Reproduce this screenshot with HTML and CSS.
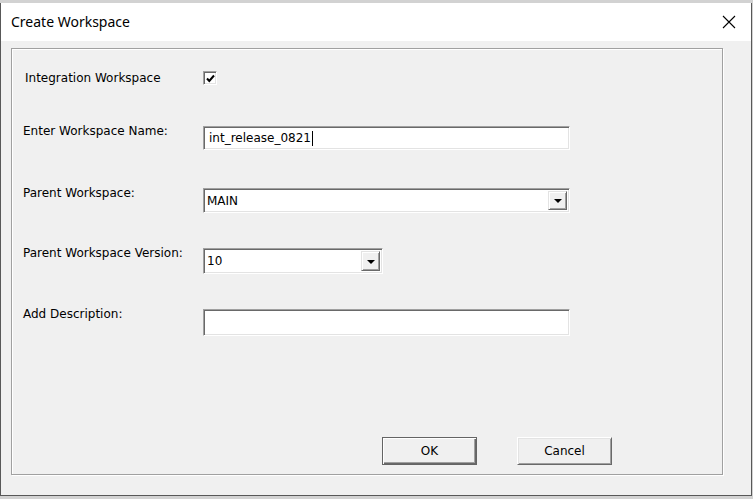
FILE: index.html
```html
<!DOCTYPE html>
<html lang="en">
<head>
    <meta charset="UTF-8">
    <title>Create Workspace</title>
    <link rel="stylesheet" href="styles.css">
</head>
<body>
    <div class="dialog">
        <div class="titlebar">
            <span class="title">Create Workspace</span>
            <svg class="close" width="14" height="14" viewBox="0 0 14 14">
                <path d="M1 1 L13 13 M13 1 L1 13" stroke="#000" stroke-width="1.1" fill="none"/>
            </svg>
        </div>
        <div class="client">
            <div class="group">
                <div class="row row-check">
                    <label class="label">Integration Workspace</label>
                    <div class="checkbox">
                        <svg width="11" height="11" viewBox="0 0 11 11">
                            <path d="M2 5.5 L4.3 8 L9 2.5" stroke="#000" stroke-width="2" fill="none"/>
                        </svg>
                    </div>
                </div>

                <div class="row row-name">
                    <label class="label">Enter Workspace Name:</label>
                    <div class="field wide">int_release_0821<span class="caret"></span></div>
                </div>

                <div class="row row-parent">
                    <label class="label">Parent Workspace:</label>
                    <div class="field combo wide">
                        <span>MAIN</span>
                        <div class="drop"><span class="arrow"></span></div>
                    </div>
                </div>

                <div class="row row-version">
                    <label class="label">Parent Workspace Version:</label>
                    <div class="field combo short">
                        <span>10</span>
                        <div class="drop"><span class="arrow"></span></div>
                    </div>
                </div>

                <div class="row row-desc">
                    <label class="label">Add Description:</label>
                    <div class="field wide"></div>
                </div>

                <div class="buttons">
                    <button class="btn default">OK</button>
                    <button class="btn">Cancel</button>
                </div>
            </div>
        </div>
    </div>
</body>
</html>
```

FILE: styles.css
```css
body {
    margin: 0;
    padding: 3px 0 0 0;
    background-color: #d2d2d2;
    font-family: "DejaVu Sans", Tahoma, sans-serif;
    font-size: 12px;
    color: #000;
}

.dialog {
    width: 752px;
    box-sizing: border-box;
    border-left: 1px solid #585858;
    border-right: 1px solid #585858;
    border-bottom: 1px solid #585858;
    background-color: #f0f0f0;
}

.titlebar {
    height: 38px;
    background-color: #fff;
    display: flex;
    align-items: center;
    justify-content: space-between;
    padding: 0 15px 0 10px;
}

.title {
    font-family: "Noto Sans", "Open Sans", sans-serif;
    font-size: 14px;
    margin-top: -1px;
}

.close {
    display: block;
    margin-top: -1px;
}

.client {
    height: 454px;
    padding: 7px 0 0 10px;
    box-sizing: border-box;
}

.group {
    width: 712px;
    height: 427px;
    box-sizing: border-box;
    border: 1px solid #a0a0a0;
    box-shadow: inset 1px 1px 0 #fff, 1px 1px 0 #fff;
    padding-left: 11px;
}

.row {
    display: flex;
    align-items: flex-start;
}

.label {
    width: 180px;
    line-height: 14px;
    margin-top: -2px;
}

.row-check {
    margin-top: 22px;
    align-items: center;
}

.row-check .label {
    margin: 0 0 0 2px;
    width: 178px;
}

.row-name { margin-top: 41px; }
.row-parent { margin-top: 38px; }
.row-version { margin-top: 35px; }
.row-desc { margin-top: 35px; }

.checkbox {
    width: 14px;
    height: 14px;
    box-sizing: border-box;
    background-color: #fff;
    border: 1px solid;
    border-color: #a0a0a0 #fff #fff #a0a0a0;
    box-shadow: inset 1px 1px 0 #696969, inset -1px -1px 0 #e3e3e3;
    display: flex;
    align-items: center;
    justify-content: center;
}

.field {
    box-sizing: border-box;
    height: 24px;
    background-color: #fff;
    border: 1px solid;
    border-color: #a0a0a0 #fff #fff #a0a0a0;
    box-shadow: inset 1px 1px 0 #696969, inset -1px -1px 0 #e3e3e3;
    padding: 0 4px 0 5px;
    display: flex;
    align-items: center;
    font-size: 12px;
}

.wide { width: 367px; }
.short { width: 180px; }

.row-parent .field { height: 25px; }
.row-version .field { height: 26px; }
.row-desc .field { height: 27px; }

.caret {
    display: inline-block;
    width: 1px;
    height: 15px;
    background-color: #000;
    margin-left: 1px;
}

.combo {
    justify-content: space-between;
    padding: 2px 2px 2px 3px;
    align-items: stretch;
}

.combo span {
    align-self: center;
}

.drop {
    width: 19px;
    box-sizing: border-box;
    background-color: #f0f0f0;
    border: 1px solid;
    border-color: #e3e3e3 #696969 #696969 #e3e3e3;
    box-shadow: inset 1px 1px 0 #fff, inset -1px -1px 0 #a0a0a0;
    display: flex;
    align-items: center;
    justify-content: center;
}

.arrow {
    width: 0;
    height: 0;
    border-left: 4px solid transparent;
    border-right: 4px solid transparent;
    border-top: 4px solid #000;
    margin-top: 1px;
}

.buttons {
    display: flex;
    gap: 40px;
    margin: 101px 0 0 359px;
}

.btn {
    width: 95px;
    height: 28px;
    box-sizing: border-box;
    font-family: "DejaVu Sans", Tahoma, sans-serif;
    font-size: 12px;
    color: #000;
    background-color: #f0f0f0;
    border: 1px solid;
    border-color: #fff #696969 #696969 #fff;
    box-shadow: inset 1px 1px 0 #e3e3e3, inset -1px -1px 0 #a0a0a0;
    padding: 0;
}

.btn.default {
    border: 1px solid #646464;
    box-shadow: inset 1px 1px 0 #fff, inset -1px -1px 0 #696969, inset -2px -2px 0 #a0a0a0;
}
```
